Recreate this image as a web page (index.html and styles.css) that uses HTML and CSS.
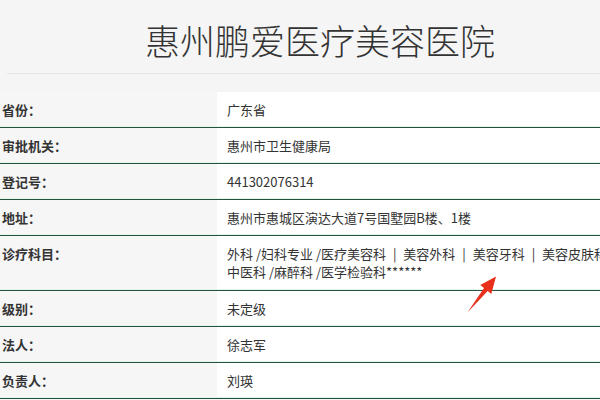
FILE: index.html
```
<!DOCTYPE html>
<html lang="zh-CN">
<head>
<meta charset="utf-8">
<title>惠州鹏爱医疗美容医院</title>
<link rel="stylesheet" href="styles.css">
</head>
<body>
<div class="page">
  <h1 class="title">惠州鹏爱医疗美容医院</h1>
  <div class="rule"></div>
  <div class="info">
    <div class="row"><div class="label">省份：</div><div class="value">广东省</div></div>
    <div class="row"><div class="label">审批机关：</div><div class="value">惠州市卫生健康局</div></div>
    <div class="row"><div class="label">登记号：</div><div class="value">441302076314</div></div>
    <div class="row"><div class="label">地址：</div><div class="value">惠州市惠城区演达大道7号国墅园B楼、1楼</div></div>
    <div class="row"><div class="label">诊疗科目：</div><div class="value multi">外科 /妇科专业 /医疗美容科 <span class="sep">|</span> 美容外科 <span class="sep">|</span> 美容牙科 <span class="sep">|</span> 美容皮肤科<br>中医科 /麻醉科 /医学检验科******</div></div>
    <div class="row"><div class="label">级别：</div><div class="value">未定级</div></div>
    <div class="row"><div class="label">法人：</div><div class="value">徐志军</div></div>
    <div class="row"><div class="label">负责人：</div><div class="value">刘瑛</div></div>
  </div>
  <svg class="arrow" viewBox="460 252 42 44" width="42" height="44">
    <polygon points="467.4,292.6 484.0,268.0 480.3,265.0 496,256.5 491.3,273.9 487.7,271.0" fill="#e8301c"/>
  </svg>
</div>
</body>
</html>
```
FILE: styles.css
```
html, body {
  margin: 0;
  padding: 0;
  background: #f5f5f5;
  overflow: hidden;
}
body {
  font-family: "Microsoft YaHei", "Noto Sans CJK SC", "Noto Sans", sans-serif;
  color: #333;
}
.page {
  position: relative;
  width: 640px;
}
.title {
  margin: 20px 0 0;
  height: 40px;
  line-height: 40px;
  font-family: "Noto Sans CJK SC Light", "Noto Sans CJK SC DemiLight", "Noto Sans CJK SC", sans-serif;
  font-size: 35px;
  font-weight: 300;
  text-align: center;
  color: #333;
}
.rule {
  margin: 13px 7px 0;
  border-top: 1px solid #e6e6e6;
}
.info {
  margin-top: 18px;
}
.row {
  display: grid;
  grid-template-columns: 217px 1fr;
  border-bottom: 1px solid #24523e;
}
.label {
  padding: 9px 0 8px 2px;
  font-size: 13px;
  line-height: 18px;
  font-weight: bold;
  color: #333;
  background: #f6f6f6;
  box-shadow: inset 0 -1px 0 #e4f6ec;
}
.value {
  padding: 9px 0 8px 10px;
  font-size: 13px;
  line-height: 18px;
  color: #333;
  background: #fff;
  white-space: nowrap;
  box-shadow: inset 0 -1px 0 #e4f6ec;
}
.value.multi {
  padding-top: 9px;
  padding-bottom: 9px;
  line-height: 18px;
}
.sep {
  margin: 0 4px;
}
.arrow {
  position: absolute;
  left: 460px;
  top: 252px;
}
```
